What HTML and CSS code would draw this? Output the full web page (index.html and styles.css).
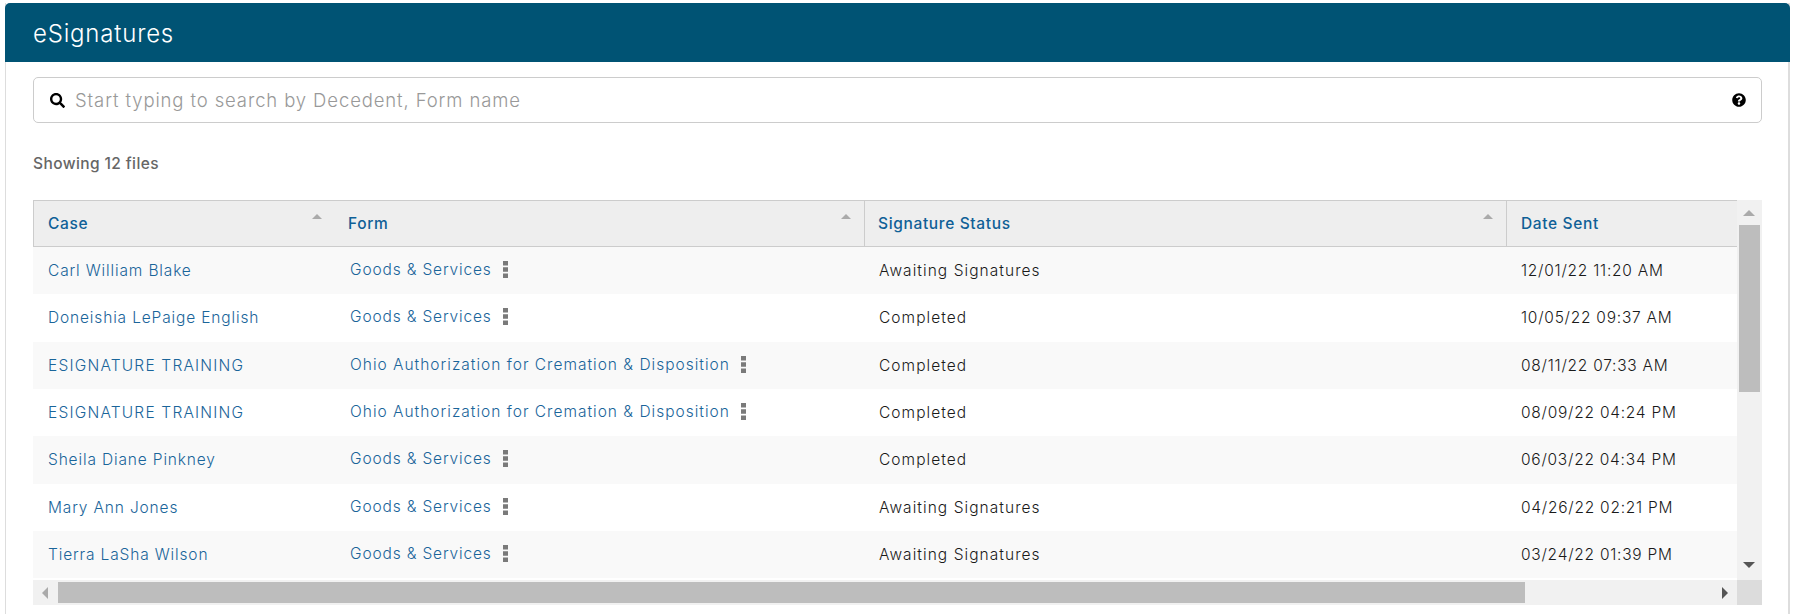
FILE: index.html
```html
<!DOCTYPE html>
<html lang="en">
<head>
<meta charset="utf-8">
<title>eSignatures</title>
<link rel="stylesheet" href="styles.css">
</head>
<body>
<section class="card">
  <h1 class="card-title">eSignatures</h1>
  <div class="card-body">
    <div class="search">
      <svg class="icon find" viewBox="0 0 512 512"><path d="M505 442.7L405.3 343c-4.5-4.5-10.6-7-17-7H372c27.6-35.3 44-79.7 44-128C416 93.1 322.9 0 208 0S0 93.1 0 208s93.1 208 208 208c48.3 0 92.7-16.4 128-44v16.3c0 6.4 2.5 12.5 7 17l99.7 99.7c9.4 9.4 24.6 9.4 33.9 0l28.3-28.3c9.4-9.4 9.4-24.6.1-34zM208 336c-70.7 0-128-57.2-128-128 0-70.7 57.2-128 128-128 70.7 0 128 57.2 128 128 0 70.7-57.2 128-128 128z"/></svg>
      <span class="placeholder">Start typing to search by Decedent, Form name</span>
      <svg class="icon" viewBox="0 0 512 512"><path d="M504 256c0 136.997-111.043 248-248 248S8 392.997 8 256C8 119.083 119.043 8 256 8s248 111.083 248 248zM262.655 90c-54.497 0-89.255 22.957-116.549 63.758-3.536 5.286-2.353 12.415 2.715 16.258l34.699 26.31c5.205 3.947 12.621 3.008 16.665-2.122 17.864-22.658 30.113-35.797 57.303-35.797 20.429 0 45.698 13.148 45.698 32.958 0 14.976-12.363 22.667-32.534 33.976C247.128 238.528 216 254.941 216 296v4c0 6.627 5.373 12 12 12h56c6.627 0 12-5.373 12-12v-1.333c0-28.462 83.186-29.647 83.186-106.667 0-58.002-60.165-102-116.531-102zM256 338c-25.365 0-46 20.635-46 46 0 25.364 20.635 46 46 46s46-20.636 46-46c0-25.365-20.635-46-46-46z"/></svg>
    </div>
    <p class="count">Showing 12 files</p>
    <div class="scroller">
      <div class="viewport">
        <div class="table">
          <div class="row head">
            <div class="th first"><span>Case</span><i class="sort"></i></div>
            <div class="th"><span>Form</span><i class="sort"></i></div>
            <div class="th sep"><span>Signature Status</span><i class="sort"></i></div>
            <div class="th sep last"><span>Date Sent</span></div>
          </div>
          <div class="row">
            <a class="td case">Carl William Blake</a>
            <div class="td form"><a>Goods &amp; Services</a><svg class="dots" viewBox="0 0 5 17"><path d="M0 0h5v4.5H0zM0 6.25h5v4.5H0zM0 12.5h5V17H0z"/></svg></div>
            <div class="td status">Awaiting Signatures</div>
            <div class="td date">12/01/22 11:20 AM</div>
          </div>
          <div class="row">
            <a class="td case">Doneishia LePaige English</a>
            <div class="td form"><a>Goods &amp; Services</a><svg class="dots" viewBox="0 0 5 17"><path d="M0 0h5v4.5H0zM0 6.25h5v4.5H0zM0 12.5h5V17H0z"/></svg></div>
            <div class="td status">Completed</div>
            <div class="td date">10/05/22 09:37 AM</div>
          </div>
          <div class="row">
            <a class="td case caps">ESIGNATURE TRAINING</a>
            <div class="td form"><a class="long">Ohio Authorization for Cremation &amp; Disposition</a><svg class="dots" viewBox="0 0 5 17"><path d="M0 0h5v4.5H0zM0 6.25h5v4.5H0zM0 12.5h5V17H0z"/></svg></div>
            <div class="td status">Completed</div>
            <div class="td date">08/11/22 07:33 AM</div>
          </div>
          <div class="row">
            <a class="td case caps">ESIGNATURE TRAINING</a>
            <div class="td form"><a class="long">Ohio Authorization for Cremation &amp; Disposition</a><svg class="dots" viewBox="0 0 5 17"><path d="M0 0h5v4.5H0zM0 6.25h5v4.5H0zM0 12.5h5V17H0z"/></svg></div>
            <div class="td status">Completed</div>
            <div class="td date">08/09/22 04:24 PM</div>
          </div>
          <div class="row">
            <a class="td case">Sheila Diane Pinkney</a>
            <div class="td form"><a>Goods &amp; Services</a><svg class="dots" viewBox="0 0 5 17"><path d="M0 0h5v4.5H0zM0 6.25h5v4.5H0zM0 12.5h5V17H0z"/></svg></div>
            <div class="td status">Completed</div>
            <div class="td date">06/03/22 04:34 PM</div>
          </div>
          <div class="row">
            <a class="td case">Mary Ann Jones</a>
            <div class="td form"><a>Goods &amp; Services</a><svg class="dots" viewBox="0 0 5 17"><path d="M0 0h5v4.5H0zM0 6.25h5v4.5H0zM0 12.5h5V17H0z"/></svg></div>
            <div class="td status">Awaiting Signatures</div>
            <div class="td date">04/26/22 02:21 PM</div>
          </div>
          <div class="row">
            <a class="td case">Tierra LaSha Wilson</a>
            <div class="td form"><a>Goods &amp; Services</a><svg class="dots" viewBox="0 0 5 17"><path d="M0 0h5v4.5H0zM0 6.25h5v4.5H0zM0 12.5h5V17H0z"/></svg></div>
            <div class="td status">Awaiting Signatures</div>
            <div class="td date">03/24/22 01:39 PM</div>
          </div>
        </div>
      </div>
      <div class="vbar">
        <i class="arrow up"></i>
        <div class="vthumb"></div>
        <i class="arrow down"></i>
      </div>
      <div class="hbar">
        <i class="arrow left"></i>
        <div class="hthumb"></div>
        <i class="arrow right"></i>
      </div>
      <div class="corner"></div>
    </div>
  </div>
</section>
</body>
</html>
```
FILE: styles.css
```css
* { box-sizing: border-box; }
html, body { margin: 0; height: 100%; overflow: hidden; background: #fff; }
body { padding: 3px 4px 0 5px; font-family: "Inter", "Liberation Sans", sans-serif; font-size: 15.5px; font-weight: 350; letter-spacing: 0.85px; color: #1a1a1a; }

.card { height: 700px; border-left: 1px solid #ddd; border-right: 2px solid #ddd; }
.card-title {
  margin: 0 -2px 0 -1px;
  height: 59px;
  padding: 1px 0 0 28px;
  display: flex;
  align-items: center;
  background: #005374;
  color: #fff;
  font-size: 24px;
  font-weight: 300;
  letter-spacing: 0.8px;
  border-radius: 5px 5px 0 0;
}
.card-body { padding: 15px 26px 0 27px; }

.search {
  height: 46px;
  display: flex;
  align-items: center;
  gap: 10px;
  padding: 0 15px 0 16px;
  border: 1px solid #ccc;
  border-radius: 5px;
}
.icon { width: 14px; height: 14px; flex: none; fill: #000; }
.icon.find { width: 15px; height: 15px; }
.placeholder { flex: 1; color: #999; font-size: 18.5px; font-weight: 350; letter-spacing: 0.88px; }

.count { margin: 31px 0 27px; height: 19px; line-height: 19px; font-size: 15.5px; font-weight: 500; color: #666; letter-spacing: 0.4px; }

.scroller { display: grid; grid-template-columns: 1704px 25px; grid-template-rows: 380px 25px; }
.viewport { overflow: hidden; }
.table { width: 1773px; }

.row { display: grid; grid-template-columns: 302px 529px 642px 300px; height: 47.33px; align-items: center; }
.row:nth-child(even) { background: #f9f9f9; }
.head { height: 47px; background: #eee; border-top: 1px solid #ccc; border-bottom: 1px solid #ccc; align-items: stretch; font-weight: 450; letter-spacing: 0.65px; }

.th { display: flex; justify-content: space-between; padding: 0 13px; align-items: center; color: #0f6097; }
.th.first { border-left: 1px solid #ccc; padding-left: 14px; }
.th.sep { border-left: 1px solid #ccc; }
.th.last { padding-left: 14px; }
.sort { align-self: flex-start; margin-top: 13px; width: 0; height: 0; border-left: 5px solid transparent; border-right: 5px solid transparent; border-bottom: 5px solid #aaa; }

.td { padding-left: 15px; }
.status { letter-spacing: 1.05px; }
.date { letter-spacing: 0.75px; }
.case, .form a { color: #1a659a; }
.case.caps { letter-spacing: 1.2px; }
.form a.long { letter-spacing: 1px; }
.form { display: flex; align-items: center; gap: 11px; padding-bottom: 2px; }
.dots { width: 5px; height: 17px; fill: #7a7a7a; }

.vbar { background: #f1f1f1; display: flex; flex-direction: column; align-items: center; position: relative; }
.vthumb { width: 21px; height: 167px; background: #bdbdbd; margin-top: 25px; }
.hbar { background: #f1f1f1; display: flex; align-items: center; position: relative; padding-left: 25px; }
.hthumb { width: 1467px; height: 21px; background: #bdbdbd; }
.corner { background: #dcdcdc; }

.arrow { position: absolute; width: 0; height: 0; }
.arrow.up { top: 10px; left: 6px; border-left: 6px solid transparent; border-right: 6px solid transparent; border-bottom: 6px solid #aaa; }
.arrow.down { bottom: 12px; left: 6px; border-left: 6px solid transparent; border-right: 6px solid transparent; border-top: 6px solid #555; }
.arrow.left { left: 9px; top: 7px; border-top: 6px solid transparent; border-bottom: 6px solid transparent; border-right: 6px solid #aaa; }
.arrow.right { right: 9px; top: 7px; border-top: 6px solid transparent; border-bottom: 6px solid transparent; border-left: 6px solid #555; }
```
